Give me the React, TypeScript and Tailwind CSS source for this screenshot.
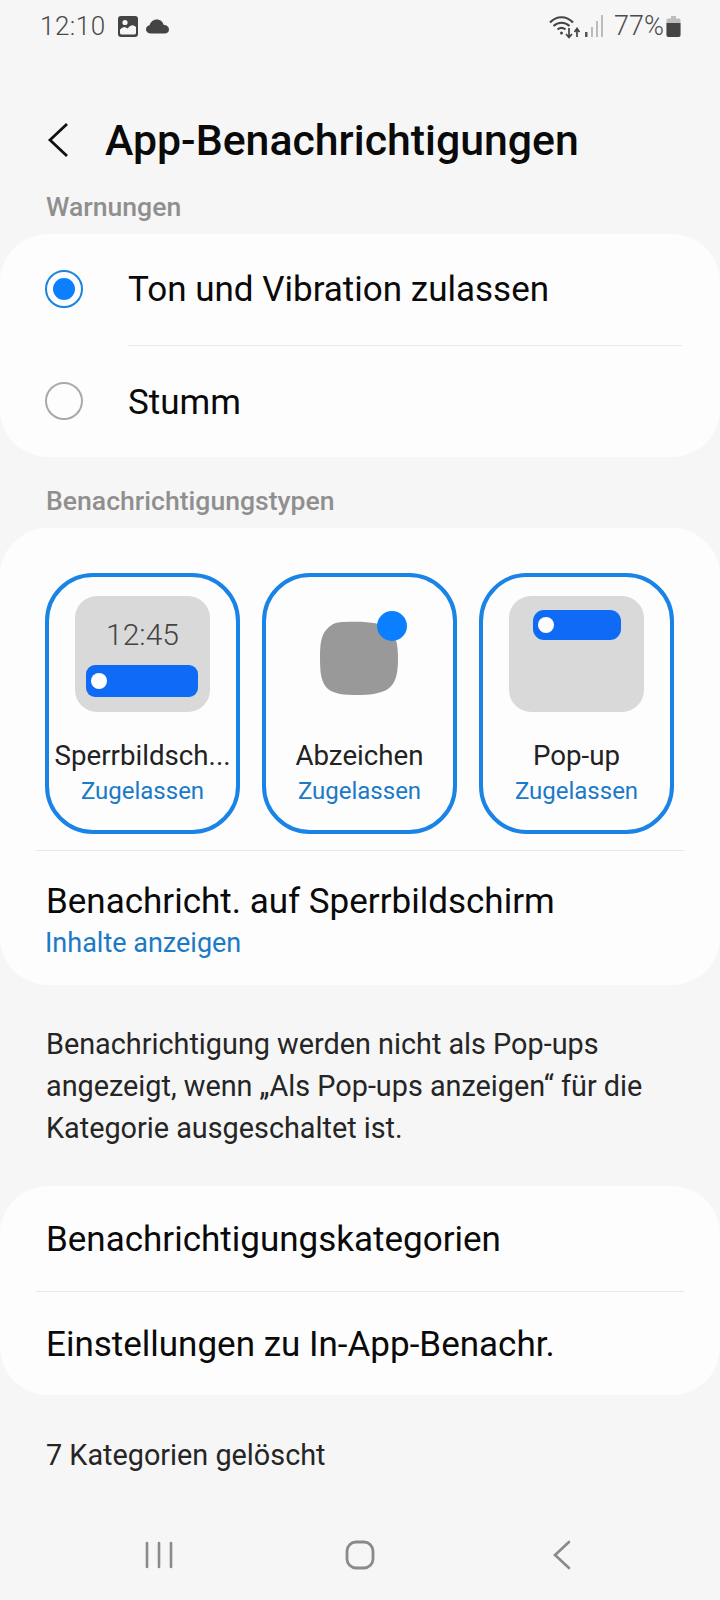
import React from 'react'

function StatusBar() {
    return (
        <div className="h-[52px] flex items-center justify-between pl-[40px] pr-[39px] text-[#4a4a4a]">
            <div className="flex items-center">
                <span className="text-[26px] font-light leading-none tracking-[0.5px]">12:10</span>
                <svg className="ml-[12px]" width="20" height="21" viewBox="0 0 20 21">
                    <rect x="0" y="0" width="20" height="21" rx="3" fill="#444" />
                    <circle cx="7" cy="6.5" r="2.6" fill="#f6f6f6" />
                    <path d="M2 17 L2 13.5 Q6 9 9.5 12.5 Q14 7 18 11 L18 17 Q18 18.5 16 18.5 L4 18.5 Q2 18.5 2 17Z" fill="#f6f6f6" />
                </svg>
                <svg className="ml-[8px]" width="23" height="15" viewBox="0 0 23 15">
                    <path d="M5 14.5 C1.8 14.5 0 12.6 0 10.2 C0 8 1.6 6.5 3.6 6.3 C4.4 2.8 7.4 0.5 10.8 0.5 C14.2 0.5 16.8 2.6 17.6 5.8 C20.6 6 23 7.8 23 10.4 C23 12.8 21.2 14.5 18.4 14.5 Z" fill="#444" />
                </svg>
            </div>
            <div className="flex items-center">
                <svg width="32" height="25" viewBox="0 0 32 25" fill="none" stroke="#444">
                    <path d="M1 8.5 C7.5 1.5 17.5 1.5 24 8.5" strokeWidth="2.2" />
                    <path d="M4.5 12 C9 7.5 16 7.5 20.5 12" strokeWidth="2" />
                    <path d="M8.5 15.5 C11 13.5 14 13.5 16.5 15.5" strokeWidth="2" />
                    <circle cx="12.5" cy="19" r="1.5" fill="#444" stroke="none" />
                    <path d="M20 14 V23 M17 20 L20 23.5 L23 20" strokeWidth="1.7" />
                    <path d="M28 23 V15 M25.5 18 L28 14.5 L30.5 18" strokeWidth="1.7" />
                </svg>
                <svg className="ml-[3px]" width="20" height="24" viewBox="0 0 20 24">
                    <rect x="1" y="18" width="2.5" height="5" fill="#555" />
                    <rect x="7" y="13" width="2" height="10" fill="#bbb" />
                    <rect x="12" y="7" width="2" height="16" fill="#bbb" />
                    <rect x="17" y="1" width="2" height="22" fill="#bbb" />
                </svg>
                <span className="ml-[10px] text-[27px] font-light leading-none">77%</span>
                <svg className="ml-[2px]" width="15" height="21" viewBox="0 0 15 21">
                    <path d="M5 0 H10 V2.5 H13 Q14.5 2.5 14.5 4 V19 Q14.5 21 12.5 21 H2.5 Q0.5 21 0.5 19 V4 Q0.5 2.5 2 2.5 H5Z" fill="#bdbdbd" />
                    <path d="M0.5 7 H14.5 V19 Q14.5 21 12.5 21 H2.5 Q0.5 21 0.5 19Z" fill="#444" />
                </svg>
            </div>
        </div>
    )
}

function SectionLabel({ children, className }: { children: React.ReactNode; className: string }) {
    return <div className={`pl-[46px] text-[26.6px] font-medium leading-none text-[#8f8f8f] ${className}`}>{children}</div>
}

function Radio({ checked }: { checked?: boolean }) {
    if (checked) {
        return (
            <div className="w-[38px] h-[38px] rounded-full border-2 border-[#1a83e6] flex items-center justify-center">
                <div className="w-[22px] h-[22px] rounded-full bg-[#0a7fff]" />
            </div>
        )
    }
    return <div className="w-[38px] h-[38px] rounded-full border-2 border-[#a9a9a9]" />
}

function Tile({ label, children }: { label: string; children: React.ReactNode }) {
    return (
        <div className="w-[195px] h-[261px] rounded-[48px] border-[4px] border-[#1a83e6] flex flex-col items-center pt-[19px]">
            <div className="w-[135px] h-[116px] relative">{children}</div>
            <div className="mt-[29px] w-[187px] text-center text-[27.7px] leading-[30px] text-[#222] whitespace-nowrap">{label}</div>
            <div className="mt-[5px] text-[24px] leading-[30px] text-[#1a7ac8]">Zugelassen</div>
        </div>
    )
}

function NotificationBar({ className, dotLeft }: { className: string; dotLeft: string }) {
    return (
        <div className={`absolute bg-[#0f6bf5] flex items-center ${className}`}>
            <div className={`w-[16px] h-[16px] rounded-full bg-white ${dotLeft}`} />
        </div>
    )
}

function Card({ className, children }: { className: string; children: React.ReactNode }) {
    return <div className={`bg-[#fdfdfd] rounded-[48px] ${className}`}>{children}</div>
}

export default function App() {
    return (
        <div className="w-[720px] h-[1600px] bg-[#f6f6f6] overflow-hidden text-[#0a0a0a] font-['Roboto',sans-serif]">
            <StatusBar />

            <div className="h-[76px] mt-[50px] flex items-center">
                <svg className="ml-[46px]" width="24" height="36" viewBox="0 0 24 36" fill="none" stroke="#111" strokeWidth="2.8">
                    <path d="M21 2 L4 18 L21 34" />
                </svg>
                <h1 className="ml-[35px] text-[42.8px] font-medium leading-none">App-Benachrichtigungen</h1>
            </div>

            <SectionLabel className="mt-[16px]">Warnungen</SectionLabel>

            <Card className="mt-[13px] h-[223px] flex flex-col">
                <div className="h-[111px] flex items-center pl-[45px]">
                    <Radio checked />
                    <span className="ml-[45px] text-[35px] leading-none">Ton und Vibration zulassen</span>
                </div>
                <div className="ml-[128px] mr-[38px] h-px bg-[#e8e8e8]" />
                <div className="flex-1 flex items-center pl-[45px]">
                    <Radio />
                    <span className="ml-[45px] mt-[2px] text-[35px] leading-none">Stumm</span>
                </div>
            </Card>

            <SectionLabel className="mt-[31px]">Benachrichtigungstypen</SectionLabel>

            <Card className="mt-[14px] h-[457px] pt-[45px]">
                <div className="flex gap-[22px] pl-[45px]">
                    <Tile label="Sperrbildsch...">
                        <div className="absolute inset-0 rounded-[22px] bg-[#d9d9d9]" />
                        <div className="absolute top-[24px] inset-x-0 text-center text-[30px] font-light leading-none text-[#444]">12:45</div>
                        <NotificationBar className="left-[11px] top-[69px] w-[112px] h-[32px] rounded-[9px]" dotLeft="ml-[5px]" />
                    </Tile>
                    <Tile label="Abzeichen">
                        <svg className="absolute left-0 top-0" width="135" height="116" viewBox="0 0 135 116">
                            <path d="M52 26 C76 25 88 27 96 32 C104 38 106 48 106 62 C106 78 104 87 96 93 C88 98 76 99 66 99 C52 99 42 98 36 93 C29 87 28 76 28 62 C28 48 29 38 36 32 C40 28 44 26 52 26Z" fill="#999" />
                            <circle cx="100" cy="30" r="15" fill="#0a7fff" />
                        </svg>
                    </Tile>
                    <Tile label="Pop-up">
                        <div className="absolute inset-0 rounded-[22px] bg-[#d9d9d9]" />
                        <NotificationBar className="left-[24px] top-[14px] w-[88px] h-[30px] rounded-[11px]" dotLeft="ml-[5px]" />
                    </Tile>
                </div>
                <div className="mx-[36px] mt-[16px] h-px bg-[#e8e8e8]" />
                <div className="pl-[46px] mt-[33px] text-[35px] leading-none">Benachricht. auf Sperrbildschirm</div>
                <div className="pl-[45px] mt-[11px] text-[27px] leading-none text-[#1a7ac8]">Inhalte anzeigen</div>
            </Card>

            <p className="mt-[38px] pl-[46px] text-[28.8px] leading-[42px] text-[#252525] whitespace-nowrap">
                Benachrichtigung werden nicht als Pop-ups<br />
                angezeigt, wenn „Als Pop-ups anzeigen“ für die<br />
                Kategorie ausgeschaltet ist.
            </p>

            <Card className="mt-[37px] h-[209px] flex flex-col">
                <div className="h-[105px] flex items-center pl-[46px] pt-[2px] text-[35px] leading-none">Benachrichtigungskategorien</div>
                <div className="mx-[36px] h-px bg-[#e8e8e8]" />
                <div className="flex-1 flex items-center pl-[46px] pt-[2px] text-[35px] leading-none">Einstellungen zu In-App-Benachr.</div>
            </Card>

            <div className="mt-[46px] pl-[46px] text-[28.8px] leading-none text-[#252525]">7 Kategorien gelöscht</div>

            <div className="mt-[65px] flex items-center h-[40px] text-[#8a8a8a]">
                <svg className="ml-[145px]" width="28" height="28" viewBox="0 0 28 28" fill="none" stroke="#8a8a8a" strokeWidth="2.6" strokeLinecap="round">
                    <path d="M2 2 V26 M14 2 V26 M26 2 V26" />
                </svg>
                <svg className="ml-[172px]" width="30" height="30" viewBox="0 0 30 30" fill="none" stroke="#8a8a8a" strokeWidth="2.8">
                    <rect x="2" y="2" width="26" height="26" rx="9" />
                </svg>
                <svg className="ml-[178px]" width="18" height="30" viewBox="0 0 18 30" fill="none" stroke="#8a8a8a" strokeWidth="2.6" strokeLinecap="round">
                    <path d="M16 2 L2 15 L16 28" />
                </svg>
            </div>
        </div>
    )
}
